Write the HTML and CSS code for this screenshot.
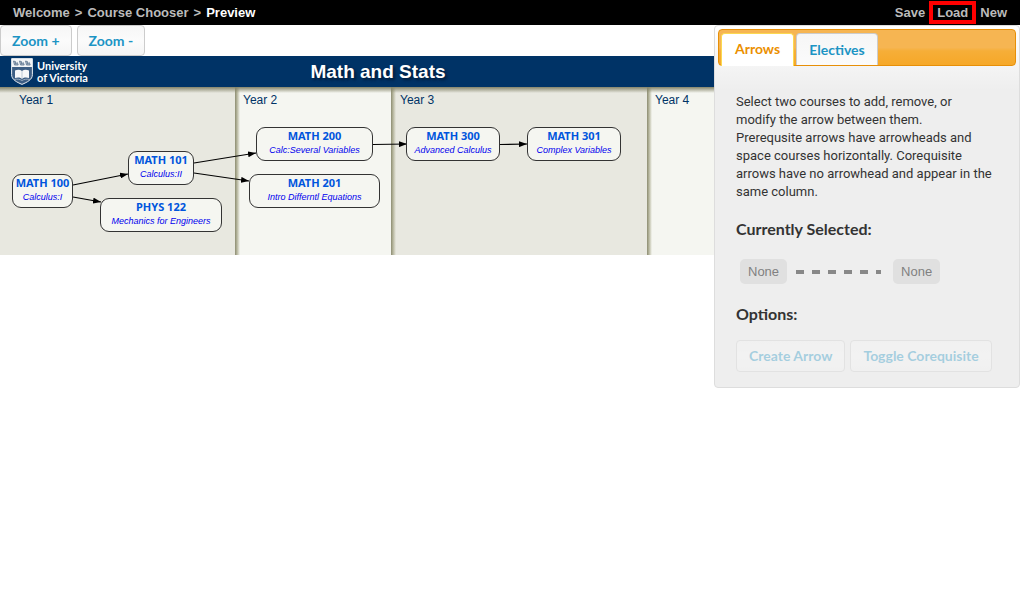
FILE: index.html
```html
<!DOCTYPE html>
<html lang="en">
<head>
<meta charset="utf-8">
<title>Course Chooser - Preview</title>
<link rel="stylesheet" href="styles.css">
</head>
<body>
<header class="topbar">
  <nav class="crumbs"><a href="#">Welcome</a><span>&gt;</span><a href="#">Course Chooser</a><span>&gt;</span><a href="#" class="current">Preview</a></nav>
  <nav class="actions"><a href="#">Save</a><a href="#" class="marked">Load</a><a href="#">New</a></nav>
</header>
<main class="workspace">
  <section class="preview">
    <div class="toolbar">
      <button type="button" class="button">Zoom +</button>
      <button type="button" class="button">Zoom -</button>
    </div>
    <div class="viewport">
      <div class="chart">
        <div class="banner">
          <div class="brand">
            <svg class="crest" viewBox="0 0 22 27" aria-hidden="true">
              <path d="M.6.6h20.8v16c0 5-5 7.500-10.400 9.800C5.600 24.100.6 21.600.6 16.600z" fill="#3d5e84" stroke="#e8edf2"/>
              <path d="M1 1h20v8H1z" fill="#f3f5f7"/>
              <path d="M2.500 3l2 .6V6l1.800-1.500.9 2.500H3.500zM8.500 3l2 .6V6l1.800-1.500.9 2.500H9.500zM14.500 3l2 .6V6l1.800-1.500.9 2.500h-3.700z" fill="#a9b6c4" stroke="#5d7590" stroke-width=".8"/>
              <path d="M4 12.500c2.500-1 5-1 7 .5 2-1.500 4.500-1.500 7-.5v7.500c-2.500-.8-5-.8-7 .8-2-1.600-4.500-1.600-7-.8z" fill="#f7f8fa"/>
              <path d="M11 13v8M3 21.500c3-.7 6-.3 8 1 2-1.300 5-1.700 8-1" fill="none" stroke="#aebccb" stroke-width=".8"/>
            </svg>
            <span class="brand-name">University<br>of Victoria</span>
          </div>
          <h1 class="title">Math and Stats</h1>
        </div>
        <div class="years">
          <div class="year">Year 1</div>
          <div class="year">Year 2</div>
          <div class="year">Year 3</div>
          <div class="year">Year 4</div>
          <svg class="links" viewBox="0 0 756 168" aria-hidden="true">
            <defs><marker id="head" viewBox="0 0 8 6" refX="8" refY="3" markerWidth="8" markerHeight="6" markerUnits="userSpaceOnUse" orient="auto"><path d="M0 0l8 3-8 3z"/></marker></defs>
            <path class="link" d="M73 98L128 87"/>
            <path class="link" d="M73 110L101 115"/>
            <path class="link" d="M194 76L256 66"/>
            <path class="link" d="M194 86L249 94"/>
            <path class="link" d="M373 57.500L407 57"/>
            <path class="link" d="M500 57.500L527 57"/>
          </svg>
          <div class="course math100"><b>MATH 100</b><i>Calculus:I</i></div>
          <div class="course math101"><b>MATH 101</b><i>Calculus:II</i></div>
          <div class="course phys122"><b>PHYS 122</b><i>Mechanics for Engineers</i></div>
          <div class="course math200"><b>MATH 200</b><i>Calc:Several Variables</i></div>
          <div class="course math201"><b>MATH 201</b><i>Intro Differntl Equations</i></div>
          <div class="course math300"><b>MATH 300</b><i>Advanced Calculus</i></div>
          <div class="course math301"><b>MATH 301</b><i>Complex Variables</i></div>
        </div>
      </div>
    </div>
  </section>
  <aside class="panel">
    <div class="tabs" role="tablist">
      <button type="button" class="tab active" role="tab" aria-selected="true">Arrows</button>
      <button type="button" class="tab" role="tab" aria-selected="false">Electives</button>
    </div>
    <div class="panel-body" role="tabpanel">
      <p class="help">Select two courses to add, remove, or<br>modify the arrow between them.<br>Prerequsite arrows have arrowheads and space courses horizontally. Corequisite arrows have no arrowhead and appear in the same column.</p>
      <h2 class="heading">Currently Selected:</h2>
      <div class="selection">
        <span class="slot">None</span>
        <span class="dashes"></span>
        <span class="slot">None</span>
      </div>
      <h2 class="heading">Options:</h2>
      <div class="options">
        <button type="button" class="button" disabled>Create Arrow</button>
        <button type="button" class="button" disabled>Toggle Corequisite</button>
      </div>
    </div>
  </aside>
</main>
</body>
</html>
```

FILE: styles.css
```css
* { box-sizing: border-box; }
body {
  margin: 0;
  background: #fff;
  font-family: Lato, sans-serif;
  font-size: 14px;
  color: #333;
}
button { font: inherit; }

.topbar {
  display: flex;
  justify-content: space-between;
  align-items: center;
  height: 25px;
  padding: 0 13px;
  background: #000;
  color: #bbb;
  font: bold 13px/18px "Liberation Sans", Arial, sans-serif;
}
.topbar a { color: #bbb; text-decoration: none; }
.topbar .current { color: #fff; }
.crumbs { display: flex; gap: 5px; }
.actions { display: flex; align-items: center; gap: 4px; }
.actions .marked { border: 4px solid #f00; padding: 0 4px; line-height: 15px; }

.workspace { display: flex; align-items: flex-start; }
.preview { flex: 1; min-width: 0; }
.toolbar { display: flex; gap: 5px; }
.button {
  height: 31px;
  padding: 0 12px;
  border: 1px solid #ccc;
  border-radius: 4px;
  background: linear-gradient(#f6f6f6, #fbfbfb 50%, #f5f5f5);
  color: #1c94c4;
  font-weight: bold;
}
.toolbar .button { padding: 0 11px 1px; }

.viewport { overflow: hidden; }
.chart { width: 756px; }
.banner {
  display: grid;
  grid-template-columns: 1fr auto 1fr;
  align-items: center;
  height: 31px;
  padding: 0 11px;
  background: #036;
  color: #fff;
}
.brand { display: flex; align-items: center; gap: 4px; }
.crest { width: 22px; height: 27px; }
.brand-name { font: bold 11px/12px Lato, sans-serif; }
.title {
  margin: 0;
  font: bold 19px/28px "Liberation Sans", Arial, sans-serif;
  text-shadow: 2px 2px 3px #001a38;
}
.years {
  position: relative;
  display: grid;
  grid-template-columns: 235px 156px 256px 1fr;
  height: 168px;
}
.year {
  padding: 5px 8px;
  background:
    linear-gradient(#85856a, #85856a00 6px),
    linear-gradient(90deg, #8c8c72, #b5b59c 2px, #b5b59c00 5px),
    #f5f6f1;
  color: #036;
  font: 12px/16px "Liberation Sans", Arial, sans-serif;
}
.year:nth-child(odd) { background-color: #e8e8e0; padding-left: 9px; }
.year:first-child { padding-left: 19px; background: linear-gradient(#85856a, #85856a00 6px), #e8e8e0; }

.links { position: absolute; inset: 0; width: 756px; height: 168px; }
.link { fill: none; stroke: #000; stroke-width: 1.2; marker-end: url(#head); }
.course {
  position: absolute;
  height: 34px;
  border: 1px solid #333;
  border-radius: 9px;
  background: #f5f6f1;
  text-align: center;
  white-space: nowrap;
}
.course b, .course i { display: block; }
.course b { color: #05d; font: bold 11px/16px "Noto Sans", sans-serif; }
.course i { color: #00e; font: italic 9px/12px "Liberation Sans", Arial, sans-serif; }
.math100 { left: 12px; top: 87px; width: 61px; }
.math101 { left: 128px; top: 64px; width: 66px; }
.phys122 { left: 100px; top: 111px; width: 122px; }
.math200 { left: 256px; top: 40px; width: 117px; }
.math201 { left: 249px; top: 87px; width: 131px; }
.math300 { left: 406px; top: 40px; width: 94px; }
.math301 { left: 527px; top: 40px; width: 94px; }

.panel {
  flex: 0 0 306px;
  padding: 3px;
  border: 1px solid #ddd;
  border-radius: 4px;
  background: #eee linear-gradient(#fff, #eee 64px) no-repeat;
}
.tabs {
  display: flex;
  align-items: flex-end;
  gap: 2px;
  height: 37px;
  padding: 0 2px;
  border: 1px solid #e78f08;
  border-radius: 4px;
  background: linear-gradient(#f6b552 0 50%, #f6ae38 60%, #f6a828);
}
.tab {
  height: 32px;
  padding: 0 12px 1px;
  border: 1px solid #ccc;
  border-bottom: 0;
  border-radius: 4px 4px 0 0;
  background: linear-gradient(#f6f6f6, #fbfbfb);
  color: #1c94c4;
  font-weight: bold;
}
.tab.active {
  height: 33px;
  margin-bottom: -1px;
  padding: 0 13px 3px;
  border-color: #fbd850;
  background: #fff;
  color: #eb8f00;
}
.panel-body { padding: 27px 16px 12px 18px; }
.help { margin: 0 0 19px; font: 13px/18px Roboto, sans-serif; }
.heading { margin: 0; font-size: 16px; line-height: 18px; }
.selection { display: flex; align-items: center; padding: 0 4px; margin: 21px 0; }
.slot {
  padding: 4px 8px;
  border-radius: 5px;
  background: #e0e0e0;
  color: #808080;
  font: 13px/17px "Liberation Sans", Arial, sans-serif;
}
.dashes {
  width: 85px;
  height: 4px;
  margin: 0 12px 0 9px;
  background: repeating-linear-gradient(90deg, #888 0 8px, transparent 8px 16px);
}
.options { display: flex; gap: 5px; margin-top: 17px; }
.button:disabled { opacity: .35; height: 32px; padding-bottom: 2px; }
```
